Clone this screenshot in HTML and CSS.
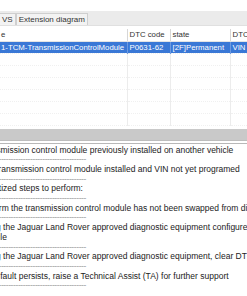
FILE: index.html
```html
<!DOCTYPE html>
<html lang="en">

<head>
    <meta charset="UTF-8">
    <meta name="viewport" content="width=device-width, initial-scale=1.0">
    <title>DTC</title>
    <link rel="stylesheet" href="styles.css">
</head>

<body>
    <div class="window">
        <div class="tabs">
            <span class="tab">VS</span>
            <span class="tab">Extension diagram</span>
        </div>

        <table class="grid">
            <tr class="head">
                <td class="c1">e</td>
                <td class="c2">DTC code</td>
                <td class="c3">state</td>
                <td class="c4">DTC description</td>
            </tr>
            <tr class="selected">
                <td class="c1">1-TCM-TransmissionControlModule</td>
                <td>P0631-62</td>
                <td>[2F]Permanent</td>
                <td>VIN not programmed or mismatch</td>
            </tr>
            <tr><td></td><td></td><td></td><td></td></tr>
            <tr><td></td><td></td><td></td><td></td></tr>
            <tr><td></td><td></td><td></td><td></td></tr>
            <tr><td></td><td></td><td></td><td></td></tr>
            <tr><td></td><td></td><td></td><td></td></tr>
            <tr><td></td><td></td><td></td><td></td></tr>
        </table>

        <div class="splitter"></div>

        <div class="log">
            <div class="inner">
                <p>Transmission control module previously installed on another vehicle</p>
                <p class="sep">--------------------------------------------</p>
                <p>The transmission control module installed and VIN not yet programed</p>
                <p class="sep">--------------------------------------------</p>
                <p>Prioritized steps to perform:</p>
                <p class="sep">--------------------------------------------</p>
                <p>Confirm the transmission control module has not been swapped from different vehicle</p>
                <p class="sep">--------------------------------------------</p>
                <p>Using the Jaguar Land Rover approved diagnostic equipment configure the transmission<br>module</p>
                <p class="sep">--------------------------------------------</p>
                <p>Using the Jaguar Land Rover approved diagnostic equipment, clear DTC and retest</p>
                <p class="sep">--------------------------------------------</p>
                <p>If the fault persists, raise a Technical Assist (TA) for further support</p>
                <p class="sep">--------------------------------------------</p>
            </div>
        </div>
    </div>
</body>

</html>
```

FILE: styles.css
```css
* {
    margin: 0;
    padding: 0;
    box-sizing: border-box;
}

body {
    width: 247px;
    height: 296px;
    overflow: hidden;
    background: #fff;
    font-family: "Liberation Sans", Arial, sans-serif;
    font-size: 8px;
    color: #222;
}

.window {
    padding-top: 11px;
}

/* tab strip */
.tabs {
    display: flex;
    height: 15px;
    padding-top: 2px;
    background: #ebebeb;
    border-bottom: 1px solid #e0e0e0;
    margin-left: -1px;
}

.tab {
    height: 12px;
    line-height: 11px;
    padding: 0 2px;
    background: #f3f3f3;
    border: 1px solid #cfcfcf;
    border-bottom: none;
    color: #333;
}

/* dtc table */
.grid {
    margin-top: 3px;
    border-collapse: collapse;
    table-layout: fixed;
    width: 270px;
    font-size: 7.8px;
}

.grid td {
    height: 12px;
    padding: 0 2px;
    white-space: nowrap;
    overflow: hidden;
    border-right: 1px solid #ececec;
    border-bottom: 1px dotted #f0f0f0;
}

.grid .c1 { width: 127px; padding-left: 1px; }
.grid .c2 { width: 43px; }
.grid .c3 { width: 60px; }

.head td {
    color: #333;
    border-right: 1px solid #d6d6d6;
    border-bottom: 1px solid #e4e4e4;
}

.selected td {
    background: #3a78d6;
    color: #fff;
    border-right: 1px solid #6d9ae0;
}

/* splitter */
.splitter {
    height: 12px;
    margin-top: 3px;
    background: #c9c9c9;
    border-bottom: 1px solid #bdbdbd;
}

/* description box */
.log {
    margin-top: 2px;
    border-top: 1px solid #b8b8b8;
    overflow: hidden;
    height: 160px;
}

.inner {
    margin-left: -21px;
    padding-top: 2px;
    width: 440px;
    font-size: 8.5px;
}

.log p {
    line-height: 9.7px;
    white-space: nowrap;
}

.log .sep {
    color: #a0a0a0;
    letter-spacing: -0.4px;
}
```
